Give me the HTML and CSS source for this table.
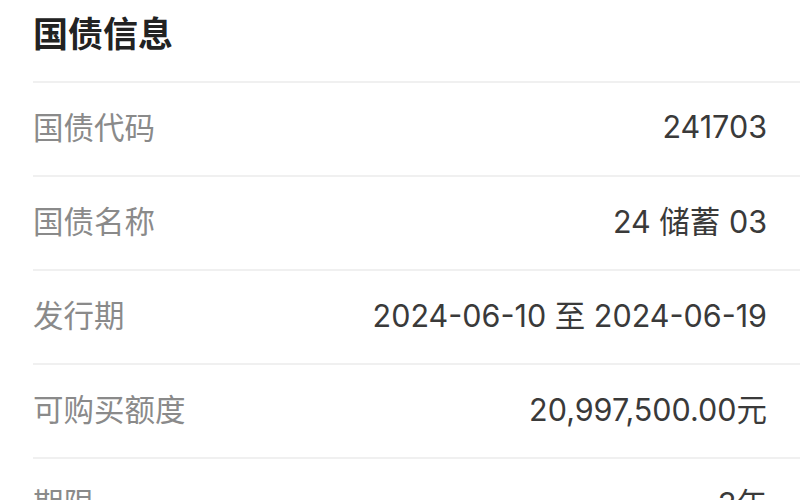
FILE: index.html
```html
<!DOCTYPE html>
<html lang="zh-CN">
<head>
<meta charset="utf-8">
<title>国债信息</title>
<link rel="stylesheet" href="styles.css">
</head>
<body>
<div class="panel">
  <h1 class="title">国债信息</h1>
  <div class="row"><span class="label">国债代码</span><span class="value">241703</span></div>
  <div class="row"><span class="label">国债名称</span><span class="value">24 储蓄 03</span></div>
  <div class="row"><span class="label">发行期</span><span class="value">2024-06-10 至 2024-06-19</span></div>
  <div class="row"><span class="label">可购买额度</span><span class="value">20,997,500.00元</span></div>
  <div class="row"><span class="label">期限</span><span class="value">3年</span></div>
</div>
</body>
</html>
```
FILE: styles.css
```css
html, body {
  margin: 0;
  padding: 0;
  background: #ffffff;
  overflow: hidden;
}
.panel {
  padding-left: 33px;
  font-family: "Noto Sans CJK SC", "Noto Sans", sans-serif;
}
.title {
  margin: 0;
  padding: 10px 0 0 0;
  height: 71px;
  font-size: 35px;
  line-height: 44px;
  font-weight: 700;
  color: #222222;
  border-bottom: 2px solid #f0f0f0;
}
.row {
  display: flex;
  justify-content: space-between;
  align-items: center;
  height: 86px;
  padding: 0 33px 6px 0;
  border-bottom: 2px solid #f0f0f0;
  font-size: 30.5px;
}
.label {
  color: #8a8a8a;
}
.value {
  color: #3a3a3a;
  font-family: Inter, "Noto Sans CJK SC", sans-serif;
}
```
